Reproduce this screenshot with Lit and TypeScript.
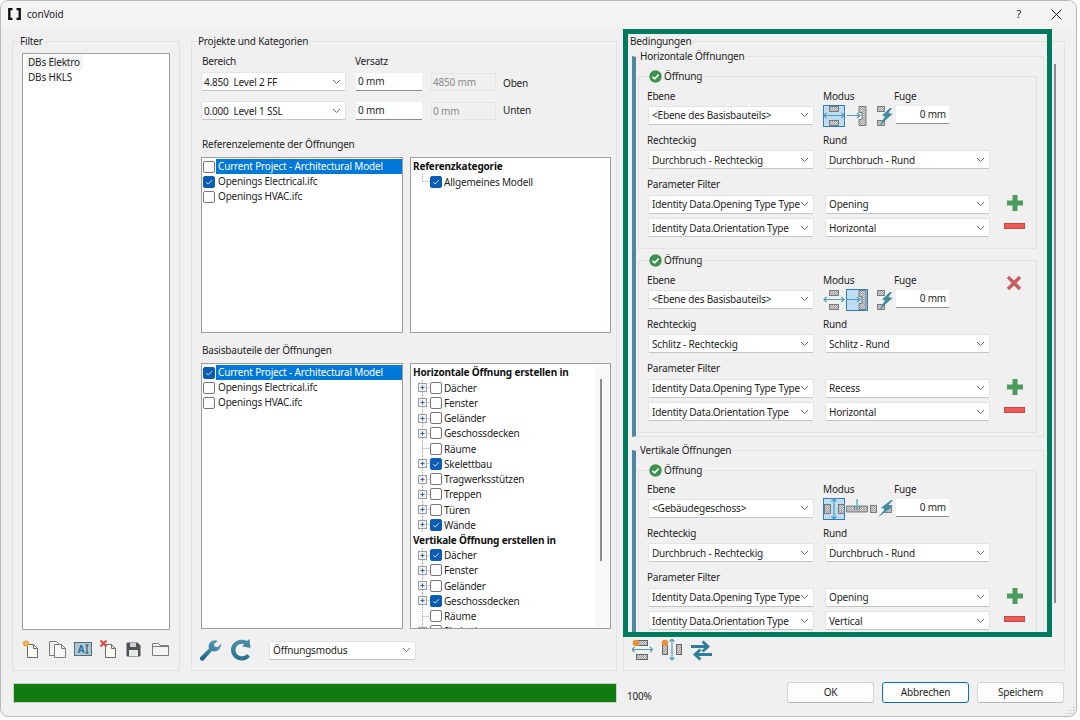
import { css, html, LitElement, svg, TemplateResult } from "lit";
import { customElement } from "lit/decorators.js";
import { classMap } from "lit/directives/class-map.js";

const chevron = html`<svg class="chev" width="9" height="6" viewBox="0 0 9 6"><path d="M1 1l3.5 3.5L8 1" fill="none" stroke="#6b6b6b" stroke-width="1"/></svg>`;
const tick = html`<svg width="12" height="12" viewBox="0 0 12 12"><path d="M3.3 6.2l1.9 1.9 3.6-3.8" fill="none" stroke="#cfe2f7" stroke-width="1"/></svg>`;

const block = (x: number, y: number, w: number, h: number) =>
    svg`<rect x=${x + 0.5} y=${y + 0.5} width=${w} height=${h} fill="url(#hatch)" stroke="#666" stroke-width="0.8"/>`;
const teal = "#4f9db5";
const dblH = svg`<path d="M1 10.5h20M3.5 8l-2.5 2.5L3.5 13M18.5 8l2.5 2.5L18.5 13" fill="none" stroke=${teal} stroke-width="1.2"/>`;
const dblV = svg`<path d="M11 1v20M8.5 3.5L11 1l2.5 2.5M8.5 18.5L11 21l2.5-2.5" fill="none" stroke=${teal} stroke-width="1.2"/>`;

const modeIcons: Record<string, TemplateResult> = {
    h: html`<svg width="22" height="22" viewBox="0 0 22 22">${block(6, 1, 9, 5)}${block(6, 15, 9, 5)}${dblH}</svg>`,
    side: html`<svg width="22" height="22" viewBox="0 0 22 22"><path d="M13 1.5h7v19h-7v-6h3v-7h-3z" fill="url(#hatch)" stroke="#666" stroke-width="0.8"/><path d="M1 10.5h13M11 8l3 2.5-3 2.5" fill="none" stroke=${teal} stroke-width="1.2"/></svg>`,
    bolt: html`<svg width="22" height="22" viewBox="0 0 22 22">${block(8, 1, 7, 5)}${block(8, 15, 7, 5)}<path d="M21 3L13 10.500l3 1L10.500 20.500 23.500 9l-4-1L23 3z" fill="#3f8ca3"/></svg>`,
    v: html`<svg width="22" height="22" viewBox="0 0 22 22">${block(1, 6, 6, 9)}${block(15, 6, 6, 9)}${dblV}</svg>`,
    down: html`<svg width="22" height="22" viewBox="0 0 22 22"><path d="M0.5 8h8v3h5V8h8v6H0.5z" fill="url(#hatch)" stroke="#666" stroke-width="0.8"/><path d="M11 1v9M8.5 7.5L11 10l2.5-2.500" fill="none" stroke=${teal} stroke-width="1.2"/></svg>`,
    boltV: html`<svg width="22" height="22" viewBox="0 0 22 22">${block(1, 7, 6, 7)}${block(15, 7, 7, 7)}<path d="M22 2L12 10l4 1L9 19.500 23.500 8.500l-4.500-1L24 2z" fill="#3f8ca3"/></svg>`,
};

const plus = html`<svg width="18" height="18" viewBox="0 0 18 18"><path d="M6.5 1h5v5.5H17v5h-5.500V17h-5v-5.500H1v-5h5.500z" fill="#4b9a5e"/></svg>`;
const minus = html`<svg width="21" height="6" viewBox="0 0 21 6"><rect x="0.5" y="0.5" width="20" height="5" fill="#ee5a55" stroke="#c44a48"/></svg>`;
const cross = html`<svg width="16" height="16" viewBox="0 0 16 16"><path d="M2 2l12 12M14 2L2 14" stroke="#c95c5c" stroke-width="3.400" fill="none"/></svg>`;
const okBadge = html`<svg width="13" height="13" viewBox="0 0 13 13"><circle cx="6.500" cy="6.500" r="6.200" fill="#3f9150"/><path d="M3.400 6.700l2.200 2.200 4-4.300" fill="none" stroke="#fff" stroke-width="1.600"/></svg>`;

const doc = svg`<path d="M5.500 4.500h6l4 4v9h-10z" fill="#fbfbf4" stroke="#6a6a6a"/><path d="M11.500 4.500v4h4" fill="none" stroke="#6a6a6a"/>`;
const toolIcons: TemplateResult[] = [
    html`<svg width="18" height="18" viewBox="0 0 18 18">${doc}<circle cx="4" cy="3.500" r="3" fill="#f0a030"/><circle cx="4" cy="3.500" r="1" fill="#ffe7b8"/></svg>`,
    html`<svg width="19" height="18" viewBox="0 0 19 18"><path d="M1.500 1.500h7l3 3v11h-10z" fill="#f2f2f2" stroke="#7a7a7a"/><path d="M6.500 4.500h7l4 4v9h-11z" fill="#f8f8f8" stroke="#7a7a7a"/><path d="M13.500 4.500v4h4" fill="none" stroke="#7a7a7a"/></svg>`,
    html`<svg width="18" height="16" viewBox="0 0 18 16"><rect x="0.500" y="1.500" width="17" height="13" fill="#a9cbd9" stroke="#5b6b74"/><text x="3.500" y="12" font-family="Liberation Sans" font-size="10" font-weight="700" fill="#2c6a90">A</text><path d="M11.500 4h3M13 4v8M11.500 12h3" stroke="#3a3a3a" fill="none"/></svg>`,
    html`<svg width="18" height="18" viewBox="0 0 18 18">${doc}<path d="M0.500 0.500l6 6M6.500 0.500l-6 6" stroke="#e0443a" stroke-width="2" fill="none"/></svg>`,
    html`<svg width="15" height="15" viewBox="0 0 15 15"><path d="M0.500 1.500a1 1 0 011-1h10l3 3v10a1 1 0 01-1 1h-12a1 1 0 01-1-1z" fill="#4f5358"/><rect x="4" y="1" width="6" height="4" fill="#cfd2d5"/><rect x="3" y="8" width="9" height="6" fill="#e9e9e9"/></svg>`,
    html`<svg width="17" height="14" viewBox="0 0 17 14"><path d="M0.500 1.500h6l1.500 2h8.500v10H0.500z" fill="#f4f4f4" stroke="#7d7d7d"/><path d="M0.500 4.500h16" stroke="#7d7d7d"/></svg>`,
];

const wrench = html`<svg width="22" height="24" viewBox="0 0 22 24"><defs><linearGradient id="w" x1="0" y1="1" x2="1" y2="0"><stop offset="0" stop-color="#1f5f86"/><stop offset="1" stop-color="#5da0bd"/></linearGradient></defs><path d="M1 19.500L10 10.500C8.700 6.500 11.500 2 16 2.200c1 0 2 .3 2.800.8l-4 3.200 1.200 2.600 3 .2 2.600-3.600c1 3.800-1.600 8-6.200 8-1 0-1.800-.2-2.500-.5L4.500 22.500c-1.500 1.300-4.500-1.300-3.500-3z" fill="url(#w)"/></svg>`;
const refresh = html`<svg width="23" height="24" viewBox="0 0 23 24"><defs><linearGradient id="r" x1="0" y1="1" x2="0" y2="0"><stop offset="0" stop-color="#28708f"/><stop offset="1" stop-color="#4f8fa8"/></linearGradient></defs><path d="M21 18.500a10 10 0 01-8 4c-6 0-11-4.700-11-10.500S7 1.800 13 1.800c2 0 3.500.5 4.700 1.200L20.500 1l1 9-8.500-1.800 2.500-2c-.7-.3-1.600-.5-2.500-.5-3.800 0-6.500 2.900-6.500 6.300s2.700 6.300 6.500 6.300c2 0 3.800-.8 5-2.200z" fill="url(#r)"/></svg>`;

const bottomIcons: TemplateResult[] = [
    html`<svg width="22" height="22" viewBox="0 0 22 22"><rect x="4.500" y="1.500" width="11" height="5" fill="url(#hatch)" stroke="#666"/><rect x="4.500" y="15.500" width="11" height="5" fill="url(#hatch)" stroke="#666"/><circle cx="4" cy="4" r="3.300" fill="#e8903e"/><path d="M0 10.500h20M2.500 8L0 10.500 2.500 13M18 8l2.500 2.500L18 13" fill="none" stroke=${teal} stroke-width="1.200"/></svg>`,
    html`<svg width="22" height="22" viewBox="0 0 22 22"><rect x="1.500" y="5.500" width="5" height="10" fill="url(#hatch)" stroke="#666"/><rect x="15.500" y="5.500" width="5" height="10" fill="url(#hatch)" stroke="#666"/><circle cx="4" cy="4" r="3.300" fill="#e8903e"/><path d="M11 0v21M8.500 2.500L11 0l2.500 2.500M8.500 18.500L11 21l2.500-2.500" fill="none" stroke=${teal} stroke-width="1.200"/></svg>`,
    html`<svg width="23" height="21" viewBox="0 0 23 21"><path d="M1 6.500h16M12.500 1.500l5.500 5-5.500 5" fill="none" stroke="#2f7d96" stroke-width="2.800"/><path d="M22 14.500H6M10.500 9.500l-5.500 5 5.500 5" fill="none" stroke="#2f7d96" stroke-width="2.800"/></svg>`,
];

const logo = html`<svg width="13" height="12" viewBox="0 0 13 12"><path d="M4.500 1H1.300v10h3.200M8.500 1h3.200v10H8.500" fill="none" stroke="#111" stroke-width="2.400"/></svg>`;

const treeLine = (expandable: boolean) => html`<svg class="exp" width="12" height="15" viewBox="0 0 12 15"><path d="M4.500 0v15M4.500 7.500H12" stroke="#a8a8a8" stroke-dasharray="1 1" fill="none"/>${expandable ? svg`<rect x="0.500" y="3.500" width="8" height="8" fill="#eef1f4" stroke="#a0a0a0"/><path d="M2.500 7.500h4M4.500 5.500v4" stroke="#3a5fa0"/>` : ""}</svg>`;

type Card = {
    ebene: string;
    eckig: string;
    rund: string;
    modes: { icon: string; on?: boolean }[];
    remove?: boolean;
    typ: string;
    ori: string;
};

const horizontal: Card[] = [
    { ebene: "<Ebene des Basisbauteils>", eckig: "Durchbruch - Rechteckig", rund: "Durchbruch - Rund", modes: [{ icon: "h", on: true }, { icon: "side" }, { icon: "bolt" }], typ: "Opening", ori: "Horizontal" },
    { ebene: "<Ebene des Basisbauteils>", eckig: "Schlitz - Rechteckig", rund: "Schlitz - Rund", modes: [{ icon: "h" }, { icon: "side", on: true }, { icon: "bolt" }], remove: true, typ: "Recess", ori: "Horizontal" },
];
const vertical: Card = { ebene: "<Gebäudegeschoss>", eckig: "Durchbruch - Rechteckig", rund: "Durchbruch - Rund", modes: [{ icon: "v", on: true }, { icon: "down" }, { icon: "boltV" }], typ: "Opening", ori: "Vertical" };

const treeItems1: [string, boolean, boolean][] = [
    ["Dächer", true, false], ["Fenster", true, false], ["Geländer", true, false], ["Geschossdecken", true, false],
    ["Räume", false, false], ["Skelettbau", true, true], ["Tragwerksstützen", true, false], ["Treppen", true, false],
    ["Türen", true, false], ["Wände", true, true],
];
const treeItems2: [string, boolean, boolean][] = [
    ["Dächer", true, true], ["Fenster", true, false], ["Geländer", true, false], ["Geschossdecken", true, true],
    ["Räume", false, false], ["Skelettbau", true, false],
];

@customElement("app-root")
export class AppRoot extends LitElement {
    private combo(text: string, cls = "") {
        return html`<div class="combo ${cls}"><span class="ctext">${text}</span>${chevron}</div>`;
    }

    private check(on: boolean) {
        return html`<span class=${classMap({ cb: true, on })}>${on ? tick : ""}</span>`;
    }

    private fileList(checked: number) {
        const names = ["Current Project - Architectural Model", "Openings Electrical.ifc", "Openings HVAC.ifc"];
        return html`<div class="list files">
            ${names.map((n, i) => html`<div class="frow">${this.check(i === checked)}<span class=${classMap({ fname: true, sel: i === 0 })}>${n}</span></div>`)}
        </div>`;
    }

    private treeRows(items: [string, boolean, boolean][]) {
        return items.map(([n, exp, on]) => html`<div class="trow">${treeLine(exp)}${this.check(on)}<span class="tname">${n}</span></div>`);
    }

    private card(c: Card) {
        return html`<fieldset class="group card">
            <legend class="badge">${okBadge}<span>Öffnung</span></legend>
            <div class="crow lbls first"><span class="l1">Ebene</span><span class="l2">Modus</span><span>Fuge</span></div>
            <div class="crow modes">
                ${this.combo(c.ebene, "w166")}
                <div class="modeset">
                    ${c.modes.map((m) => html`<span class=${classMap({ mode: true, on: !!m.on })}>${modeIcons[m.icon]}</span>`)}
                </div>
                <div class="field fuge">0 mm</div>
                ${c.remove ? html`<span class="rm">${cross}</span>` : ""}
            </div>
            <div class="crow lbls"><span class="l1">Rechteckig</span><span>Rund</span></div>
            <div class="crow pair">${this.combo(c.eckig, "w166")}${this.combo(c.rund, "w165")}</div>
            <div class="crow lbls"><span class="l1">Parameter Filter</span></div>
            <div class="crow pair">${this.combo("Identity Data.Opening Type Type", "w166")}${this.combo(c.typ, "w165")}<span class="act plus">${plus}</span></div>
            <div class="crow pair second">${this.combo("Identity Data.Orientation Type", "w166")}${this.combo(c.ori, "w165")}<span class="act minus">${minus}</span></div>
        </fieldset>`;
    }

    protected render(): TemplateResult {
        return html`
            <svg class="defs" width="0" height="0">
                <defs>
                    <pattern id="hatch" width="2" height="2" patternUnits="userSpaceOnUse">
                        <rect width="2" height="2" fill="#d6d6d6"/>
                        <path d="M0 2L2 0" stroke="#8a8a8a" stroke-width="0.7"/>
                    </pattern>
                </defs>
            </svg>
            <div class="win">
                <header class="title">
                    ${logo}<span class="ttext">conVoid</span>
                    <span class="help">?</span>
                    <svg class="close" width="11" height="11" viewBox="0 0 11 11"><path d="M.5.5l10 10M10.500.5l-10 10" stroke="#222" stroke-width="1"/></svg>
                </header>
                <div class="main">
                    <fieldset class="group pane">
                        <legend>Filter</legend>
                        <div class="list filter">
                            <div class="fi hov">DBs Elektro</div>
                            <div class="fi">DBs HKLS</div>
                        </div>
                        <div class="tools">
                            ${toolIcons.map((t) => html`<span class="tool">${t}</span>`)}
                        </div>
                    </fieldset>

                    <fieldset class="group pane middle">
                        <legend>Projekte und Kategorien</legend>
                        <div class="lbl bereich"><span class="lw">Bereich</span><span>Versatz</span></div>
                        <div class="lvl">
                            ${this.combo("4.850  Level 2 FF", "w145 tight")}
                            <div class="field off">0 mm</div>
                            <div class="ro">4850 mm</div>
                            <span class="side one">Oben</span>
                        </div>
                        <div class="lvl two">
                            ${this.combo("0.000  Level 1 SSL", "w145 tight")}
                            <div class="field off">0 mm</div>
                            <div class="ro">0 mm</div>
                            <span class="side">Unten</span>
                        </div>
                        <div class="lbl ref">Referenzelemente der Öffnungen</div>
                        <div class="lists short">
                            ${this.fileList(1)}
                            <div class="list tree">
                                <div class="thead">Referenzkategorie</div>
                                <div class="trow"><svg class="exp" width="12" height="15" viewBox="0 0 12 15"><path d="M4.500 0v7.500H12" stroke="#a8a8a8" stroke-dasharray="1 1" fill="none"/></svg>${this.check(true)}<span class="tname">Allgemeines Modell</span></div>
                            </div>
                        </div>
                        <div class="lbl basis">Basisbauteile der Öffnungen</div>
                        <div class="lists tall">
                            ${this.fileList(0)}
                            <div class="list tree clip">
                                <div class="tcol">
                                    <div class="thead">Horizontale Öffnung erstellen in</div>
                                    ${this.treeRows(treeItems1)}
                                    <div class="thead">Vertikale Öffnung erstellen in</div>
                                    ${this.treeRows(treeItems2)}
                                </div>
                                <div class="track"><div class="thumb"></div></div>
                            </div>
                        </div>
                        <div class="midbar">
                            <span class="wr">${wrench}</span>
                            <span class="rf">${refresh}</span>
                            ${this.combo("Öffnungsmodus", "w147")}
                        </div>
                    </fieldset>

                    <fieldset class="group pane">
                        <legend>Bedingungen</legend>
                        <div class="scroller">
                            <div class="scol">
                                <fieldset class="group outer h1">
                                    <legend>Horizontale Öffnungen</legend>
                                    ${horizontal.map((c) => this.card(c))}
                                </fieldset>
                                <fieldset class="group outer">
                                    <legend>Vertikale Öffnungen</legend>
                                    ${this.card(vertical)}
                                </fieldset>
                            </div>
                            <div class="sbar"></div>
                        </div>
                        <div class="bottom">
                            ${bottomIcons.map((t) => html`<span class="bi">${t}</span>`)}
                        </div>
                    </fieldset>
                </div>
                <footer class="foot">
                    <div class="bar"></div>
                    <span class="pct">100%</span>
                    <div class="btns">
                        <div class="btn">OK</div>
                        <div class="btn def">Abbrechen</div>
                        <div class="btn">Speichern</div>
                    </div>
                </footer>
                <svg class="grip" width="9" height="9" viewBox="0 0 9 9"><path d="M7 1h1v1H7zM4 4h1v1H4zM7 4h1v1H7zM1 7h1v1H1zM4 7h1v1H4zM7 7h1v1H7z" fill="#a0a0a0"/></svg>
                <div class="mark"></div>
            </div>
        `;
    }

    static styles = css`
        :host {
            display: block;
            width: 1080px;
            height: 720px;
            background: #fff;
            font-family: "Noto Sans", "Open Sans", sans-serif;
            font-size: 10px;
            letter-spacing: -0.18px;
            line-height: 14px;
            color: #1e1e1e;
        }
        .defs {
            display: block;
            height: 0;
        }
        .win {
            position: relative;
            box-sizing: border-box;
            width: 1077px;
            height: 717px;
            background: #f0f0f0;
            border: 1px solid #b9b9b9;
            border-radius: 8px;
            overflow: hidden;
        }
        .title {
            display: flex;
            align-items: center;
            height: 26px;
            background: #f3f3f3;
            padding-left: 7px;
        }
        .ttext {
            margin-left: 6px;
            font-size: 10px;
        }
        .help {
            margin-left: auto;
            font-size: 11px;
            margin-right: 30px;
        }
        .close {
            margin-right: 14px;
        }
        .main {
            display: flex;
            padding: 7px 0 0 11px;
        }
        fieldset.group {
            margin: 0;
            min-width: 0;
            box-sizing: border-box;
            border: 1px solid #e2e2e2;
            padding: 0;
        }
        legend {
            padding: 0 1px;
            margin-left: -3px;
            line-height: 15px;
            height: 15px;
        }
        .pane {
            width: 168px;
            height: 637px;
            padding: 0 0 0 9px !important;
        }
        .middle {
            width: 426px;
            margin-left: 11px !important;
        }
        .middle > legend {
            margin-left: -4px;
        }
        .pane:last-child {
            width: 442px;
            margin-left: 6px !important;
            padding-left: 8px !important;
        }
        .list {
            box-sizing: border-box;
            background: #fff;
            border: 1px solid #9e9e9e;
        }
        .filter {
            width: 148px;
            height: 577px;
            margin-top: 4px;
            padding: 1px 0 0 3px;
        }
        .fi {
            width: max-content;
            min-width: 50px;
            height: 15.3px;
            line-height: 15px;
            padding: 0 3px 0 2px;
        }
        .hov {
            background: #f4f4f4;
        }
        .tools {
            display: flex;
            align-items: center;
            height: 20px;
            margin-top: 9px;
        }
        .tool {
            display: flex;
            width: 26px;
        }
        .lbl {
            padding-left: 1px;
            height: 14px;
        }
        .bereich {
            display: flex;
            margin-top: 5px;
        }
        .lw {
            width: 153px;
        }
        .lvl {
            display: flex;
            align-items: flex-start;
            margin-top: 4px;
        }
        .lvl.two {
            margin-top: 10px;
        }
        .combo {
            box-sizing: border-box;
            display: flex;
            align-items: center;
            height: 19px;
            background: #fff;
            border: 1px solid #e4e4e4;
            border-bottom-color: #c4c4c4;
            border-radius: 2px;
            padding: 0 4px 0 3px;
            flex: none;
        }
        .combo.tight {
            padding-left: 2px;
        }
        .ctext {
            white-space: pre;
            overflow: hidden;
            flex: 1;
        }
        .chev {
            flex: none;
        }
        .w145 { width: 145px; }
        .w147 { width: 147px; }
        .w165 { width: 165px; }
        .w166 { width: 166px; }
        .field {
            box-sizing: border-box;
            height: 18px;
            background: #fff;
            border-bottom: 1px solid #8c8c8c;
            line-height: 17px;
            flex: none;
        }
        .field.off {
            width: 66px;
            margin: 1px 0 0 10px;
            padding-left: 2px;
        }
        .ro {
            box-sizing: border-box;
            width: 65px;
            height: 18px;
            margin: 1px 0 0 9px;
            border: 1px solid #e4e4e4;
            color: #8b8b8b;
            line-height: 16px;
            padding-left: 1px;
        }
        .side {
            margin: 2px 0 0 7px;
        }
        .side.one {
            margin-top: 4px;
        }
        .ref {
            margin-top: 17px;
        }
        .basis {
            margin-top: 10px;
        }
        .lists {
            display: flex;
            gap: 7px;
            margin-top: 6px;
        }
        .lists.short .list {
            height: 176px;
        }
        .lists.tall .list {
            height: 266px;
        }
        .files {
            width: 202px;
            padding-top: 1px;
        }
        .tree {
            width: 201px;
            padding-top: 1px;
        }
        .clip {
            display: flex;
            overflow: hidden;
        }
        .tcol {
            flex: 1;
            min-width: 0;
        }
        .track {
            width: 14px;
            height: 100%;
            background: #f8f8f8;
            padding: 14px 0 0 5px;
            box-sizing: border-box;
            margin-right: 1px;
        }
        .thumb {
            width: 2px;
            height: 182px;
            background: #8c8c8c;
        }
        .frow, .trow {
            display: flex;
            align-items: center;
            height: 15.25px;
            white-space: nowrap;
        }
        .files .frow:first-child {
            height: 15px;
        }
        .frow {
            padding-left: 1px;
        }
        .cb {
            box-sizing: border-box;
            flex: none;
            display: block;
            width: 12px;
            height: 12px;
            border: 1px solid #767676;
            border-radius: 2px;
            background: #fdfdfd;
        }
        .cb.on {
            background: #0b5cb3;
            border-color: #0b5cb3;
        }
        .cb.on svg {
            display: block;
            margin: -1px;
        }
        .fname {
            flex: 1;
            margin-left: 1px;
            padding-left: 2px;
            line-height: 15px;
        }
        .fname.sel {
            background: #0078d7;
            color: #fff;
        }
        .thead {
            height: 15px;
            line-height: 15px;
            padding-left: 2px;
            font-weight: 700;
            color: #111;
        }
        .trow {
            padding-left: 7px;
        }
        .exp {
            flex: none;
        }
        .tname {
            margin-left: 2px;
        }
        .midbar {
            display: flex;
            align-items: center;
            height: 24px;
            margin: 9px 0 0 -2px;
        }
        .rf {
            margin-left: 8px;
            margin-right: 17px;
        }
        .wr, .rf {
            display: flex;
        }
        .scroller {
            display: flex;
            align-items: flex-start;
            height: 583px;
            overflow: hidden;
        }
        .scol {
            width: 412px;
            flex: none;
        }
        .sbar {
            width: 2px;
            height: 539px;
            margin: 15px 0 0 10px;
            background: #8c8c8c;
            flex: none;
        }
        .outer {
            border-left: 4px solid #4d87a1 !important;
            padding-right: 6px !important;
            padding-left: 2px !important;
        }
        .outer > legend {
            margin-left: 1px;
        }
        .h1 {
            height: 388px;
            margin-bottom: 6px !important;
        }
        .card {
            height: 180px;
            padding: 0 0 0 8px !important;
            margin-top: 5px !important;
        }
        .card + .card {
            margin-top: 4px !important;
        }
        .badge {
            display: flex;
            align-items: center;
            gap: 2px;
            margin-left: 1px;
        }
        .crow {
            display: flex;
            align-items: flex-start;
        }
        .lbls {
            height: 14px;
            margin-top: 8px;
        }
        .lbls.first {
            margin-top: 4.6px;
        }
        .outer:not(.h1) .lbls.first {
            margin-top: 3.6px;
        }
        .l1 {
            width: 176px;
        }
        .l2 {
            width: 71px;
        }
        .modes {
            margin-top: 3px;
            padding-left: 1px;
            height: 19px;
        }
        .modeset {
            display: flex;
            margin: -1px 0 0 9px;
            gap: 1px;
        }
        .mode {
            box-sizing: border-box;
            display: flex;
            align-items: center;
            justify-content: center;
            height: 22px;
            min-width: 22px;
        }
        .mode svg {
            overflow: visible;
        }
        .mode.on {
            background: #bfdcf3;
            outline: 1px solid #2b7fc9;
            outline-offset: -1px;
        }
        .fuge {
            width: 53px;
            margin: 0 0 0 5px;
            text-align: right;
            padding-right: 3px;
        }
        .rm {
            display: flex;
            margin: -15px 0 0 57px;
        }
        .pair {
            margin-top: 3.5px;
            padding-left: 1px;
            gap: 11px;
            height: 19px;
        }
        .pair.second {
            margin-top: 4.5px;
        }
        .act {
            display: flex;
            align-self: flex-start;
        }
        .plus {
            margin: -1px 0 0 5px;
        }
        .minus {
            margin: 5px 0 0 3px;
        }
        .bottom {
            display: flex;
            align-items: center;
            gap: 7px;
            margin-top: 7px;
        }
        .bi {
            display: flex;
        }
        .foot {
            display: flex;
            align-items: center;
            margin-top: 11px;
            padding: 0 12px 0 12px;
        }
        .bar {
            box-sizing: border-box;
            width: 604px;
            height: 20px;
            background: #107c10;
            border: 1px solid #cfcfcf;
        }
        .pct {
            margin: 7px 0 0 10px;
        }
        .btns {
            display: flex;
            gap: 8px;
            margin-left: auto;
        }
        .btn {
            box-sizing: border-box;
            width: 87px;
            height: 21px;
            background: #fdfdfd;
            border: 1px solid #d4d4d4;
            border-bottom-color: #b8b8b8;
            border-radius: 3px;
            text-align: center;
            line-height: 18px;
        }
        .btn.def {
            border-color: #0f6cbd;
        }
        .grip {
            position: absolute;
            right: 1px;
            bottom: 1px;
        }
        .mark {
            position: absolute;
            box-sizing: border-box;
            left: 622px;
            top: 28px;
            width: 429px;
            height: 608px;
            border: 5px solid #007a5c;
            pointer-events: none;
        }
    `;
}
